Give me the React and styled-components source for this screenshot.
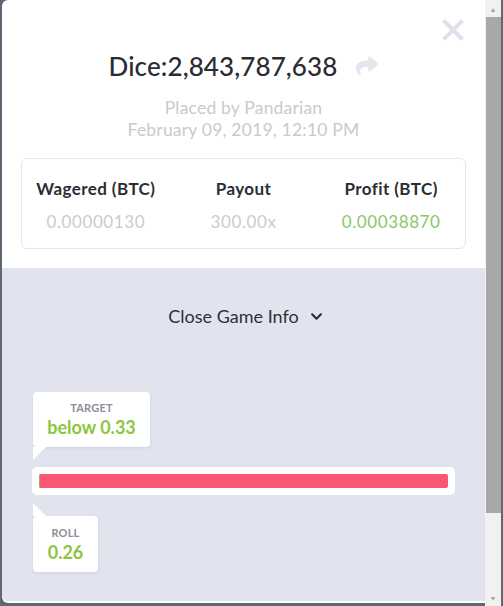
import styled, { createGlobalStyle } from "styled-components";
import { FaShare, FaChevronDown } from "react-icons/fa";

const GlobalStyle = createGlobalStyle`
  html, body {
    margin: 0;
    padding: 0;
    height: 100%;
    overflow: hidden;
  }
  body {
    background: #5f6773;
    font-family: Lato, "Open Sans", sans-serif;
  }
`;

const Page = styled.div`
  display: flex;
  height: 606px;
  padding: 0 2px 0 2px;
  box-sizing: border-box;
`;

const Modal = styled.div`
  flex: 1;
  height: 603px;
  display: flex;
  flex-direction: column;
  background: #ffffff;
  border-radius: 6px 0 0 6px;
  overflow: hidden;
  padding-bottom: 2px;
  box-sizing: border-box;
`;

const Top = styled.div`
  display: flex;
  flex-direction: column;
  align-items: center;
  padding: 19px 19px 19px 19px;
`;

const CloseRow = styled.div`
  align-self: stretch;
  display: flex;
  justify-content: flex-end;
  padding-right: 2px;
  height: 26px;
`;

const TitleRow = styled.div`
  display: flex;
  align-items: center;
  gap: 19px;
  margin-top: 5px;
`;

const Title = styled.h1`
  margin: 0;
  font-size: 26px;
  font-weight: 500;
  color: #2a2c33;
  letter-spacing: 0.1px;
`;

const Meta = styled.div`
  margin-top: 15px;
  text-align: center;
  color: #c9cacf;
  font-size: 17.5px;
  line-height: 22px;
  letter-spacing: 0.2px;
`;

const StatsCard = styled.div`
  align-self: stretch;
  margin-top: 17px;
  height: 91px;
  box-sizing: border-box;
  border: 1px solid #e4e6ed;
  border-radius: 6px;
  display: grid;
  grid-template-columns: repeat(3, 1fr);
  padding: 19px 0 0;
`;

const Stat = styled.div`
  display: flex;
  flex-direction: column;
  align-items: center;
  gap: 12px;
`;

const StatLabel = styled.div`
  font-size: 17px;
  font-weight: 700;
  color: #2b2d33;
  letter-spacing: 0.4px;
`;

const StatValue = styled.div`
  font-size: 17px;
  letter-spacing: 0.6px;
  color: ${(p) => (p.$win ? "#8bc66a" : "#cacbd0")};
`;

const Bottom = styled.div`
  flex: 1;
  background: #e1e4ef;
  border-radius: 0 0 0 6px;
  display: flex;
  flex-direction: column;
  padding: 0 30px 0 30px;
`;

const Toggle = styled.div`
  display: flex;
  align-items: center;
  justify-content: center;
  gap: 11px;
  margin-top: 37px;
  margin-left: 4px;
  font-size: 18px;
  color: #2f3139;
`;

const Slider = styled.div`
  margin-top: 65px;
  display: flex;
  flex-direction: column;
`;

const Bubble = styled.div`
  position: relative;
  align-self: flex-start;
  min-width: ${(p) => p.$w}px;
  height: ${(p) => (p.$up ? 56 : 55)}px;
  box-sizing: border-box;
  background: #ffffff;
  border-radius: 4px;
  box-shadow: 0 1px 3px rgba(70, 80, 110, 0.12);
  padding: ${(p) => (p.$up ? 10 : 9)}px 12px 0;
  margin-left: 1px;
  display: flex;
  flex-direction: column;
  align-items: center;
  margin-bottom: ${(p) => (p.$up ? 0 : 20)}px;
  margin-top: ${(p) => (p.$up ? 21 : 0)}px;

  &::after {
    content: "";
    position: absolute;
    left: 0;
    width: 13px;
    height: 13px;
    background: #ffffff;
    ${(p) =>
      p.$up
        ? "top: -13px; clip-path: polygon(0 0, 100% 100%, 0 100%);"
        : "bottom: -13px; clip-path: polygon(0 0, 100% 0, 0 100%);"}
  }
`;

const BubbleLabel = styled.div`
  font-size: 11px;
  font-weight: 700;
  color: #8b8e99;
  letter-spacing: 0.2px;
`;

const BubbleValue = styled.div`
  margin-top: 2px;
  font-size: 18px;
  font-weight: 700;
  color: #8cc63f;
`;

const Track = styled.div`
  background: #ffffff;
  border-radius: 5px;
  padding: 7px;
`;

const Bar = styled.div`
  height: 14px;
  border-radius: 2px;
  background: #f95874;
  display: flex;
  overflow: hidden;
`;

const WinPart = styled.div`
  background: #8cc63f;
  opacity: 0.8;
`;

const Scrollbar = styled.div`
  width: 16px;
  background: #f1f1f1;
  display: flex;
  flex-direction: column;
  align-items: center;
`;

const ScrollArrow = styled.div`
  height: 17px;
  display: flex;
  align-items: center;
  justify-content: center;
  color: #a3a3a3;
  font-size: 7px;
`;

const Thumb = styled.div`
  width: 15px;
  height: 496px;
  background: #a8a8a8;
`;

const ScrollRest = styled.div`
  flex: 1;
`;

function CloseIcon() {
  return (
    <svg width="22" height="22" viewBox="0 0 22 22">
      <path
        d="M3 3 L19 19 M19 3 L3 19"
        stroke="#dfe1ea"
        strokeWidth="4"
        strokeLinecap="square"
      />
    </svg>
  );
}

function App() {
  const target = 0.33;

  return (
    <>
      <GlobalStyle />
      <Page>
        <Modal>
          <Top>
            <CloseRow>
              <CloseIcon />
            </CloseRow>
            <TitleRow>
              <Title>Dice:2,843,787,638</Title>
              <FaShare color="#e3e5ef" size={22} />
            </TitleRow>
            <Meta>
              Placed by Pandarian
              <br />
              February 09, 2019, 12:10 PM
            </Meta>
            <StatsCard>
              <Stat>
                <StatLabel>Wagered (BTC)</StatLabel>
                <StatValue>0.00000130</StatValue>
              </Stat>
              <Stat>
                <StatLabel>Payout</StatLabel>
                <StatValue>300.00x</StatValue>
              </Stat>
              <Stat>
                <StatLabel>Profit (BTC)</StatLabel>
                <StatValue $win>0.00038870</StatValue>
              </Stat>
            </StatsCard>
          </Top>
          <Bottom>
            <Toggle>
              Close Game Info <FaChevronDown size={13} color="#2a2c33" />
            </Toggle>
            <Slider>
              <Bubble $w={117}>
                <BubbleLabel>TARGET</BubbleLabel>
                <BubbleValue>below {target}</BubbleValue>
              </Bubble>
              <Track>
                <Bar>
                  <WinPart style={{ width: `${target}%` }} />
                </Bar>
              </Track>
              <Bubble $w={65} $up>
                <BubbleLabel>ROLL</BubbleLabel>
                <BubbleValue>0.26</BubbleValue>
              </Bubble>
            </Slider>
          </Bottom>
        </Modal>
        <Scrollbar>
          <ScrollArrow>▲</ScrollArrow>
          <Thumb />
          <ScrollRest />
          <ScrollArrow>▼</ScrollArrow>
        </Scrollbar>
      </Page>
    </>
  );
}

export default App;
